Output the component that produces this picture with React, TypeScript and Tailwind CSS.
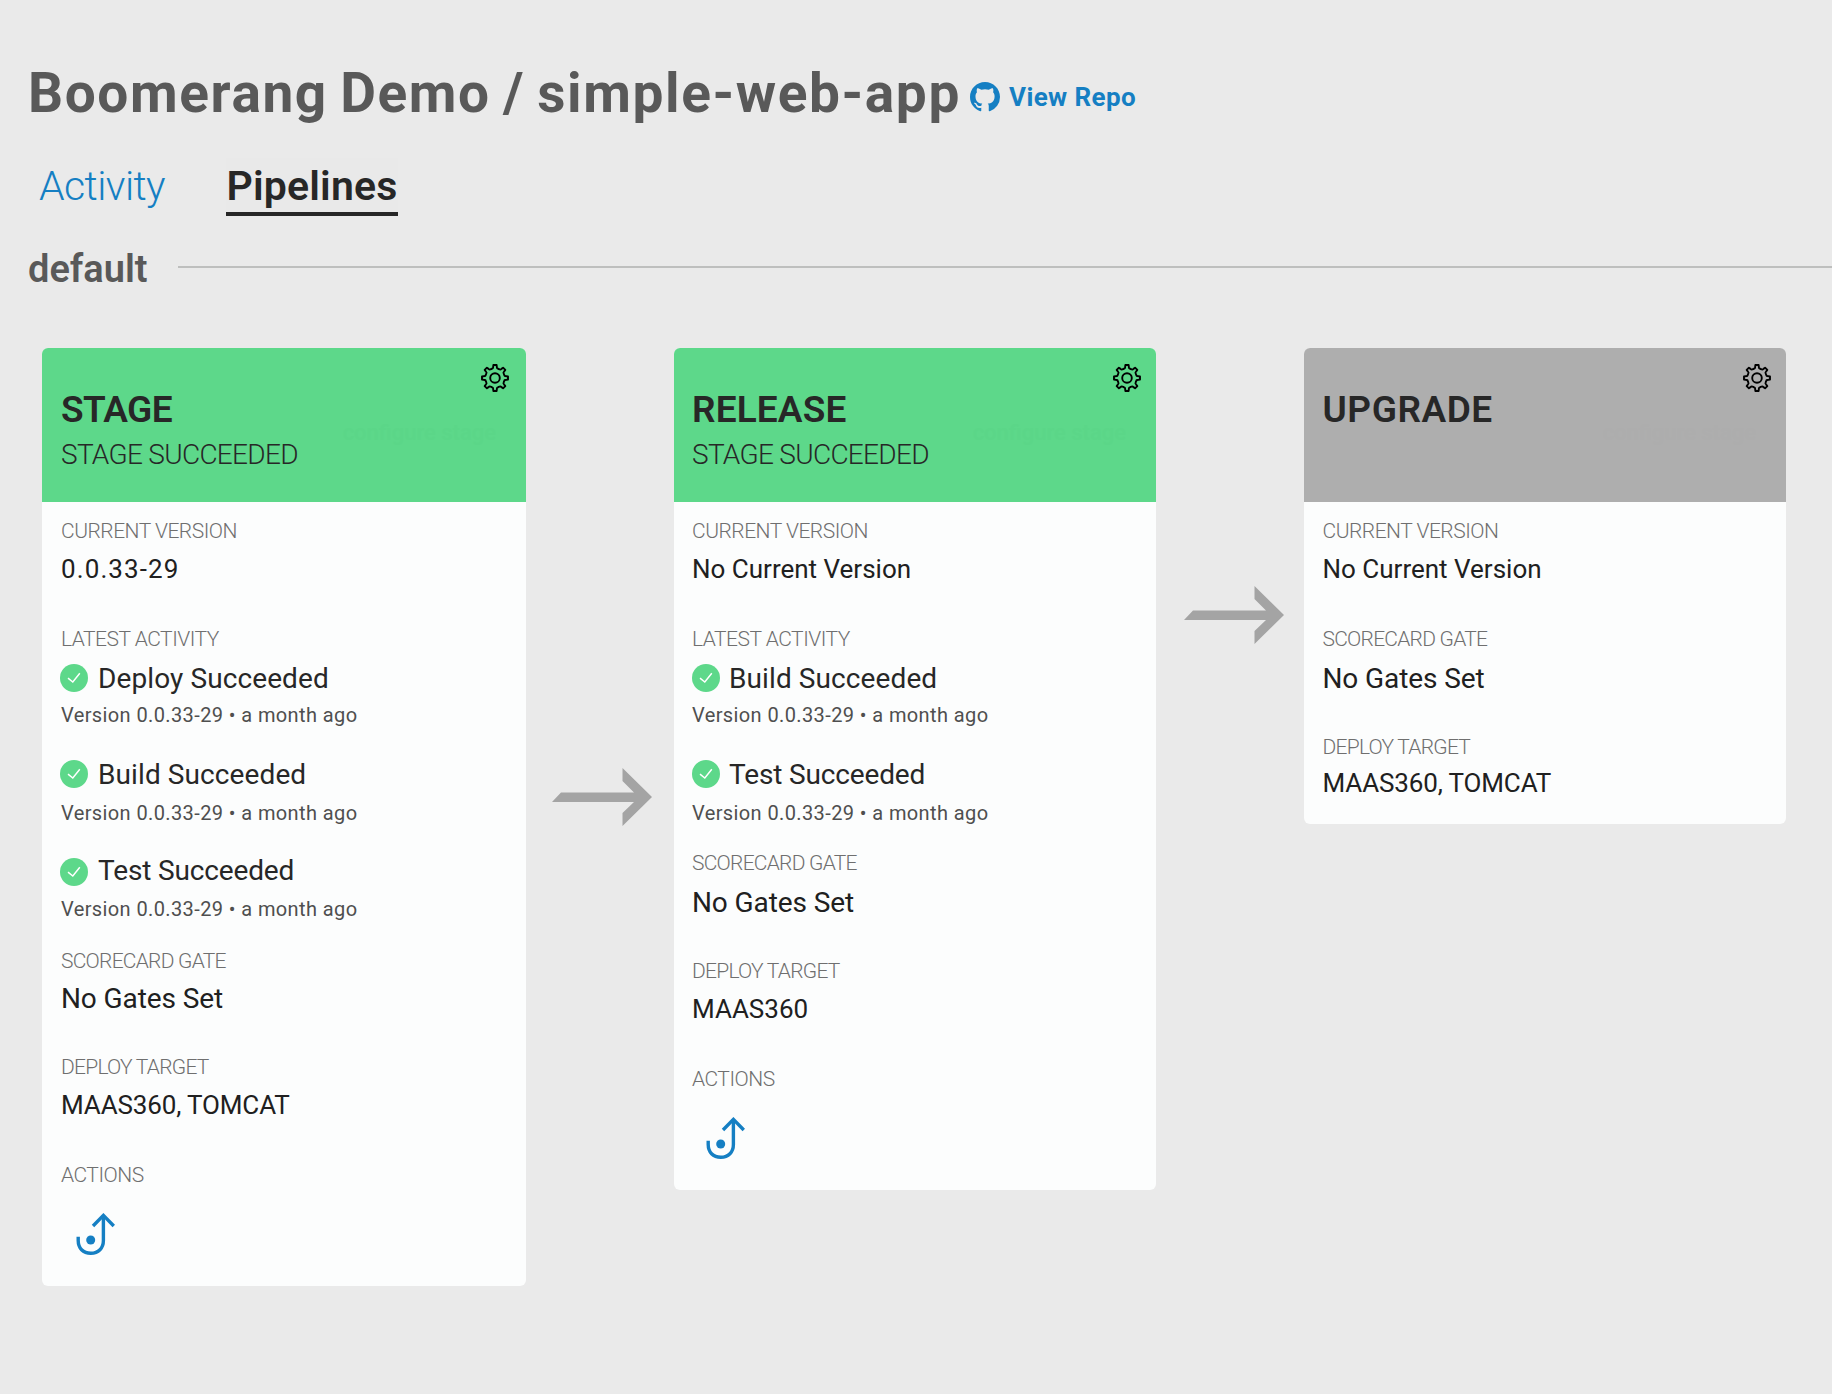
type Row =
  | { kind: "label"; text: string; className: string }
  | { kind: "value"; text: string; className: string }
  | { kind: "activity"; text: string; className: string; iconClassName?: string }
  | { kind: "meta"; className: string }
  | { kind: "action"; className: string };

type Stage = {
  name: string;
  nameClassName: string;
  status?: string;
  headerClassName: string;
  hintClassName: string;
  gearClassName: string;
  insetClassName: string;
  className: string;
  rows: Row[];
};

const stages: Stage[] = [
  {
    name: "STAGE",
    nameClassName: "tracking-[-0.6px]",
    status: "STAGE SUCCEEDED",
    headerClassName: "bg-[#5dd88a]",
    hintClassName: "text-[#5bd688]",
    gearClassName: "right-[17px]",
    insetClassName: "pl-[19px]",
    className: "w-[484px] pb-[31px]",
    rows: [
      { kind: "label", text: "CURRENT VERSION", className: "mt-[17px] tracking-[-0.5px]" },
      { kind: "value", text: "0.0.33-29", className: "mt-2.5 text-[26px] leading-8 tracking-[1.1px]" },
      { kind: "label", text: "LATEST ACTIVITY", className: "mt-[42px] tracking-[-0.5px]" },
      { kind: "activity", text: "Deploy Succeeded", className: "mt-[11px] tracking-[0.1px]", iconClassName: "-ml-px mr-px" },
      { kind: "meta", className: "mt-[9px]" },
      { kind: "activity", text: "Build Succeeded", className: "mt-[31px] tracking-[0.1px]", iconClassName: "-ml-px mr-px" },
      { kind: "meta", className: "mt-[11px]" },
      { kind: "activity", text: "Test Succeeded", className: "mt-[29px] tracking-[-0.15px]", iconClassName: "-ml-px mr-px mt-1" },
      { kind: "meta", className: "mt-[11px]" },
      { kind: "label", text: "SCORECARD GATE", className: "mt-7 tracking-[-0.75px]" },
      { kind: "value", text: "No Gates Set", className: "mt-[9px] text-[28px] leading-[34px] tracking-[-0.1px]" },
      { kind: "label", text: "DEPLOY TARGET", className: "mt-[41px] tracking-[-0.75px]" },
      { kind: "value", text: "MAAS360, TOMCAT", className: "mt-2.5 text-[26px] leading-8 tracking-[-0.13px]" },
      { kind: "label", text: "ACTIONS", className: "mt-[42px] tracking-[-0.5px]" },
      { kind: "action", className: "mt-[26px] ml-[15px]" },
    ],
  },
  {
    name: "RELEASE",
    nameClassName: "tracking-[0.15px]",
    status: "STAGE SUCCEEDED",
    headerClassName: "bg-[#5dd88a]",
    hintClassName: "text-[#5bd688]",
    gearClassName: "right-[15px]",
    insetClassName: "pl-[18px]",
    className: "w-[482px] pb-[31px]",
    rows: [
      { kind: "label", text: "CURRENT VERSION", className: "mt-[17px] tracking-[-0.5px]" },
      { kind: "value", text: "No Current Version", className: "mt-2.5 text-[26px] leading-8 tracking-[0px]" },
      { kind: "label", text: "LATEST ACTIVITY", className: "mt-[42px] tracking-[-0.5px]" },
      { kind: "activity", text: "Build Succeeded", className: "mt-[11px] tracking-[0.1px]" },
      { kind: "meta", className: "mt-[9px]" },
      { kind: "activity", text: "Test Succeeded", className: "mt-[31px] tracking-[-0.15px]" },
      { kind: "meta", className: "mt-[11px]" },
      { kind: "label", text: "SCORECARD GATE", className: "mt-[26px] tracking-[-0.75px]" },
      { kind: "value", text: "No Gates Set", className: "mt-[11px] text-[28px] leading-[34px] tracking-[-0.1px]" },
      { kind: "label", text: "DEPLOY TARGET", className: "mt-[41px] tracking-[-0.75px]" },
      { kind: "value", text: "MAAS360", className: "mt-2.5 text-[26px] leading-8 tracking-[0px]" },
      { kind: "label", text: "ACTIONS", className: "mt-[42px] tracking-[-0.5px]" },
      { kind: "action", className: "mt-[26px] ml-3.5" },
    ],
  },
  {
    name: "UPGRADE",
    nameClassName: "tracking-[0.55px]",
    headerClassName: "bg-[#aeaeae]",
    hintClassName: "text-[#adadad]",
    gearClassName: "right-[15px]",
    insetClassName: "pl-[18.5px]",
    className: "w-[482px] pb-[25px]",
    rows: [
      { kind: "label", text: "CURRENT VERSION", className: "mt-[17px] tracking-[-0.5px]" },
      { kind: "value", text: "No Current Version", className: "mt-2.5 text-[26px] leading-8 tracking-[0px]" },
      { kind: "label", text: "SCORECARD GATE", className: "mt-[42px] tracking-[-0.75px]" },
      { kind: "value", text: "No Gates Set", className: "mt-[11px] text-[28px] leading-[34px] tracking-[-0.1px]" },
      { kind: "label", text: "DEPLOY TARGET", className: "mt-[41px] tracking-[-0.75px]" },
      { kind: "value", text: "MAAS360, TOMCAT", className: "mt-2 text-[26px] leading-8 tracking-[-0.13px]" },
    ],
  },
];

function gearOutline() {
  const at = (radius: number, degrees: number) => {
    const a = (degrees * Math.PI) / 180;
    return `${(14 + radius * Math.sin(a)).toFixed(2)} ${(14 - radius * Math.cos(a)).toFixed(2)}`;
  };
  let d = "";
  for (let i = 0; i < 8; i++) {
    const c = i * 45;
    d += `${i === 0 ? "M" : "L"}${at(13.1, c - 7)} L${at(13.1, c + 7)} L${at(11.6, c + 9)} Q${at(9.6, c + 11)} ${at(9.8, c + 17)} Q${at(9.6, c + 22.5)} ${at(9.8, c + 28)} Q${at(9.6, c + 34)} ${at(11.6, c + 36)} `;
  }
  return d + "Z";
}

const gearPath = gearOutline();

function GearIcon() {
  return (
    <svg className="size-7" viewBox="0 0 28 28" fill="none" stroke="#000" strokeWidth="1.9" strokeLinejoin="round">
      <path d={gearPath} />
      <circle cx="14" cy="14" r="4.8" />
    </svg>
  );
}

function GithubIcon() {
  return (
    <svg className="size-[30px]" viewBox="0 0 16 16" fill="currentColor">
      <path d="M8 0C3.58 0 0 3.58 0 8c0 3.54 2.29 6.53 5.47 7.59.4.07.55-.17.55-.38 0-.19-.01-.82-.01-1.49-2.01.37-2.53-.49-2.69-.94-.09-.23-.48-.94-.82-1.13-.28-.15-.68-.52-.01-.53.63-.01 1.08.58 1.23.82.72 1.21 1.87.87 2.33.66.07-.52.28-.87.51-1.07-1.78-.2-3.64-.89-3.64-3.95 0-.87.31-1.59.82-2.15-.08-.2-.36-1.02.08-2.12 0 0 .67-.21 2.2.82.64-.18 1.32-.27 2-.27.68 0 1.36.09 2 .27 1.53-1.04 2.2-.82 2.2-.82.44 1.1.16 1.92.08 2.12.51.56.82 1.27.82 2.15 0 3.07-1.87 3.75-3.65 3.95.29.25.54.73.54 1.48 0 1.07-.01 1.93-.01 2.2 0 .21.15.46.55.38A8.013 8.013 0 0016 8c0-4.42-3.58-8-8-8z" />
    </svg>
  );
}

function CheckIcon({ className = "" }: { className?: string }) {
  return (
    <svg className={`size-7 shrink-0 ${className}`} viewBox="0 0 28 28" fill="none">
      <circle cx="14" cy="14" r="14" fill="#5dd88a" />
      <path d="M8 14.2 L12.8 18 L19.8 9.3" stroke="#fff" strokeWidth="1.5" />
    </svg>
  );
}

function PromoteIcon() {
  return (
    <svg className="h-[42px] w-[39px]" viewBox="0 0 39 42" fill="none" stroke="#157fc3" strokeWidth="3.4">
      <path d="M2.2 23.7 V27.5 C2.2 35 7 40.3 14.8 40.3 C22.5 40.3 27.4 35 27.4 27.5 V2.5" />
      <path d="M17 13 L27.4 2.4 L37.8 13" />
      <circle cx="14.7" cy="27" r="4.5" fill="#157fc3" stroke="none" />
    </svg>
  );
}

function ArrowIcon() {
  return (
    <svg className="h-[58px] w-[100px]" viewBox="0 0 100 58" fill="#a4a4a4">
      <path d="M0 34 L9 24.5 H82 L70.5 13 V0 L100 29 L70.5 58 V45 L82 34 Z" />
    </svg>
  );
}

function CardRow({ row }: { row: Row }) {
  switch (row.kind) {
    case "label":
      return <div className={`h-6 text-[21px] leading-6 font-light text-[#6f6f6f] ${row.className}`}>{row.text}</div>;
    case "value":
      return <div className={`h-8 font-normal text-[#202020] ${row.className}`}>{row.text}</div>;
    case "activity":
      return (
        <div className={`flex h-8 items-center gap-[9px] text-[28px] text-[#272727] ${row.className}`}>
          <CheckIcon className={row.iconClassName} />
          <span className="h-8 leading-[34px]">{row.text}</span>
        </div>
      );
    case "meta":
      return (
        <div className={`h-6 text-[20px] leading-6 font-normal tracking-[0.39px] text-[#4f4f4f] ${row.className}`}>
          Version 0.0.33-29 • a month ago
        </div>
      );
    case "action":
      return (
        <button className={`block ${row.className}`} aria-label="Promote">
          <PromoteIcon />
        </button>
      );
  }
}

function StageCard({ stage }: { stage: Stage }) {
  return (
    <section className={`shrink-0 overflow-hidden rounded-md bg-[#fcfdfd] ${stage.className}`}>
      <header className={`relative h-[154px] pt-10 ${stage.insetClassName} ${stage.headerClassName}`}>
        <h2 className={`h-11 text-[37px] leading-[44px] font-semibold text-[#272727] ${stage.nameClassName}`}>{stage.name}</h2>
        {stage.status && (
          <p className="mt-[7px] h-8 text-[28px] leading-8 font-light tracking-[-0.7px] text-[#272727]">{stage.status}</p>
        )}
        <button className={`absolute top-4 ${stage.gearClassName}`} aria-label="Configure">
          <GearIcon />
        </button>
        <span className={`absolute top-[69px] right-[30px] text-[22px] leading-8 font-medium ${stage.hintClassName}`}>configure stage</span>
      </header>
      <div className={stage.insetClassName}>
        {stage.rows.map((row, i) => (
          <CardRow key={i} row={row} />
        ))}
      </div>
    </section>
  );
}

export default function App() {
  return (
    <main className="h-[1394px] w-[1832px] overflow-hidden bg-[#eaeaea] pt-[61px] font-['Roboto',sans-serif]">
      <div className="flex h-16 pl-7">
        <h1 className="w-[933px] text-[55px] leading-[64px] font-bold tracking-[1.6px] whitespace-nowrap text-[#595959] [word-spacing:-3px]">
          Boomerang Demo / simple-web-app
        </h1>
        <a className="mt-[21px] ml-[9px] flex h-[30px] items-center gap-[9px] text-[#157fc3]" href="#repo">
          <GithubIcon />
          <span className="text-[26px] leading-8 font-bold tracking-[0.4px]">View Repo</span>
        </a>
      </div>

      <nav className="mt-[33px] flex h-[58px] text-[41px] leading-[56px]">
        <a className="ml-[39px] w-[187px] font-light tracking-[-0.6px] text-[#157fc3]" href="#activity">
          Activity
        </a>
        <a className="w-[172px] border-b-4 border-[#272727] bg-[#e9e9e9] text-center font-semibold tracking-[0.2px] text-[#272727]" href="#pipelines">
          Pipelines
        </a>
      </nav>

      <div className="mt-[29px] flex h-12 items-center pl-7">
        <h2 className="w-[150px] text-[38px] leading-[48px] font-semibold text-[#595959]">default</h2>
        <div className="mt-[-4px] h-0.5 flex-1 bg-[#bebfbe]" />
      </div>

      <div className="mt-[55px] flex items-start pl-[42px]">
        <StageCard stage={stages[0]} />
        <div className="flex items-center">
          <div className="mt-14 mr-[22px] ml-[26px]">
            <ArrowIcon />
          </div>
          <StageCard stage={stages[1]} />
        </div>
        <div className="flex items-center">
          <div className="mt-[58px] mr-5 ml-7">
            <ArrowIcon />
          </div>
          <StageCard stage={stages[2]} />
        </div>
      </div>
    </main>
  );
}
